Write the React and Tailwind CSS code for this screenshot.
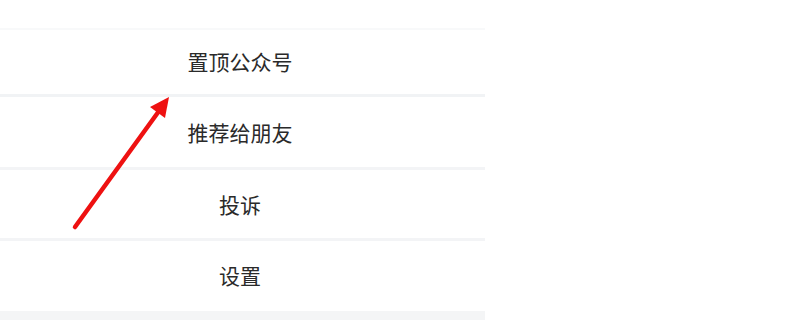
import React from "react";

const items = ["置顶公众号", "推荐给朋友", "投诉", "设置"];

export default function App() {
  return (
    <div
      className="relative w-[800px] h-[320px] overflow-hidden bg-white"
      style={{ fontFamily: '"Noto Sans CJK SC", "Noto Sans", sans-serif' }}
    >
      <div className="w-[485px] h-full flex flex-col">
        <div className="h-[28px] shrink-0" />
        <div className="h-[2px] shrink-0 bg-[#f8f9fa]" />
        <div className="h-[64px] shrink-0 flex items-center justify-center pr-[5px] text-[21px] text-[#2a2a2a]">
          {items[0]}
        </div>
        <div className="h-[3px] shrink-0 bg-[#f1f3f5]" />
        <div className="h-[70px] shrink-0 flex items-center justify-center pr-[5px] text-[21px] text-[#2a2a2a] pt-[1px]">
          {items[1]}
        </div>
        <div className="h-[3px] shrink-0 bg-[#f3f4f6]" />
        <div className="h-[68px] shrink-0 flex items-center justify-center pr-[5px] text-[21px] text-[#2a2a2a] pt-[1px]">
          {items[2]}
        </div>
        <div className="h-[3px] shrink-0 bg-[#f3f4f6]" />
        <div className="h-[70px] shrink-0 flex items-center justify-center pr-[5px] text-[21px] text-[#2a2a2a]">
          {items[3]}
        </div>
        <div className="flex-1 bg-[#f4f5f6]" />
      </div>
      <svg
        className="absolute left-0 top-0"
        width="800"
        height="320"
        viewBox="0 0 800 320"
      >
        <line
          x1="75"
          y1="227"
          x2="159"
          y2="111"
          stroke="#ee1111"
          strokeWidth="4.5"
          strokeLinecap="round"
        />
        <polygon points="169,97 165,118 150,107" fill="#ee1111" />
      </svg>
    </div>
  );
}
